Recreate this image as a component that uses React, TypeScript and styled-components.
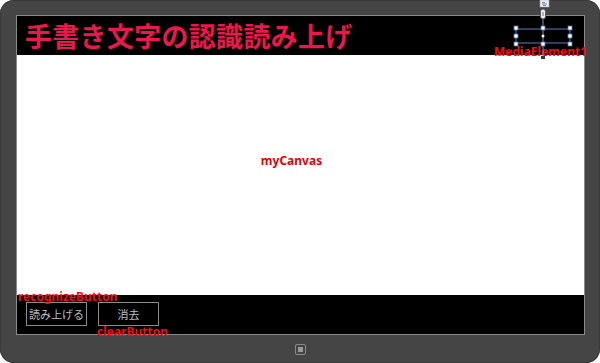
import React from "react";
import styled, { createGlobalStyle } from "styled-components";

const Global = createGlobalStyle`
  html, body { margin: 0; padding: 0; background: #fff; }
  body { font-family: "Noto Sans", "Noto Sans CJK JP", sans-serif; }
`;

const Device = styled.div`
  width: 600px;
  height: 363px;
  box-sizing: border-box;
  background: #454545;
  border-radius: 14px;
  padding: 15px 15px 0 16px;
  display: flex;
  flex-direction: column;
  position: relative;
  box-shadow: inset 0 0 0 1px #3a3a3a;
`;

const Screen = styled.div`
  width: 569px;
  height: 320px;
  box-sizing: border-box;
  border: 1px solid #8a8a8a;
  background: #000;
  display: flex;
  flex-direction: column;
  position: relative;
`;

const TitleBar = styled.div`
  height: 39px;
  display: flex;
  align-items: center;
  padding-left: 8px;
`;

const Title = styled.h1`
  margin: 0;
  font-family: "Noto Sans CJK JP", sans-serif;
  font-weight: 700;
  font-size: 27px;
  letter-spacing: 0.3px;
  color: #e8194c;
  line-height: 1;
`;

const Canvas = styled.div`
  height: 240px;
  background: #fff;
  display: flex;
  align-items: center;
  justify-content: center;
  padding: 0 18px 28px 0;
  box-sizing: border-box;
`;

const Label = styled.span`
  font-family: "Noto Sans", sans-serif;
  font-weight: 700;
  font-size: 12px;
  line-height: 1;
  color: #e60000;
`;

const Overlay = styled(Label)<{ $x: number; $y: number }>`
  position: absolute;
  left: ${(p) => p.$x}px;
  top: ${(p) => p.$y}px;
  white-space: nowrap;
  color: #f01010;
`;

const BottomBar = styled.div`
  flex: 1;
  display: flex;
  gap: 11px;
  padding: 7px 0 0 9px;
  box-sizing: border-box;
`;

const Button = styled.button`
  width: 61px;
  height: 24px;
  box-sizing: border-box;
  background: #000;
  border: 1px solid #8c8c8c;
  color: #bdbdbd;
  font-family: "Noto Sans CJK JP", sans-serif;
  font-size: 11px;
  padding: 0;
  display: flex;
  align-items: center;
  justify-content: center;
`;

const HomeRow = styled.div`
  flex: 1;
  display: flex;
  align-items: center;
  justify-content: center;
  padding-right: 1px;
`;

const HomeKey = styled.div`
  width: 9px;
  height: 9px;
  border: 1px solid #8a8a8a;
  border-radius: 2px;
  display: flex;
  align-items: center;
  justify-content: center;
  &::after {
    content: "";
    width: 5px;
    height: 5px;
    background: #9a9a9a;
  }
`;

const Adorner = styled.svg`
  position: absolute;
  left: 490px;
  top: 0;
  overflow: visible;
`;

const Handle: React.FC<{ x: number; y: number }> = ({ x, y }) => (
  <rect x={x - 2} y={y - 2} width={4} height={4} fill="#fff" stroke="#4a6fa8" strokeWidth={0.8} />
);

const MediaAdorner = () => (
  <Adorner width={100} height={70}>
    <rect x={50} y={0} width={9} height={7} fill="#eee" stroke="#aaa" strokeWidth={0.5} />
    <path d="M52 4 h5 M52 2.5 h3 M53 5.5 h3" stroke="#4a6fd0" strokeWidth={0.8} />
    <line x1={53} y1={15} x2={53} y2={58} stroke="#7090c0" strokeWidth={1} />
    <rect x={50.5} y={9} width={5} height={10} rx={2.5} fill="#eee" stroke="#555" strokeWidth={1} />
    <line x1={53} y1={12} x2={53} y2={16} stroke="#555" strokeWidth={0.8} />
    <rect x={26} y={29} width={54} height={14} fill="none" stroke="#5a7fb8" strokeWidth={1} />
    <Handle x={26} y={28} />
    <Handle x={53} y={28} />
    <Handle x={80} y={28} />
    <Handle x={26} y={36} />
    <Handle x={80} y={36} />
    <Handle x={26} y={44} />
    <Handle x={53} y={44} />
    <Handle x={80} y={44} />
    <circle cx={53} cy={36} r={1.5} fill="#fff" />
    <rect x={51} y={56} width={4} height={3} fill="#333" />
  </Adorner>
);

export default function App() {
  return (
    <>
      <Global />
      <Device>
        <Screen>
          <TitleBar>
            <Title>手書き文字の認識読み上げ</Title>
          </TitleBar>
          <Canvas>
            <Label>myCanvas</Label>
          </Canvas>
          <BottomBar>
            <Button>読み上げる</Button>
            <Button>消去</Button>
          </BottomBar>
          <Overlay $x={1} $y={275}>recognizeButton</Overlay>
          <Overlay $x={80} $y={310}>clearButton</Overlay>
          <Overlay $x={477} $y={30}>MediaElement1</Overlay>
        </Screen>
        <HomeRow>
          <HomeKey />
        </HomeRow>
        <MediaAdorner />
      </Device>
    </>
  );
}
